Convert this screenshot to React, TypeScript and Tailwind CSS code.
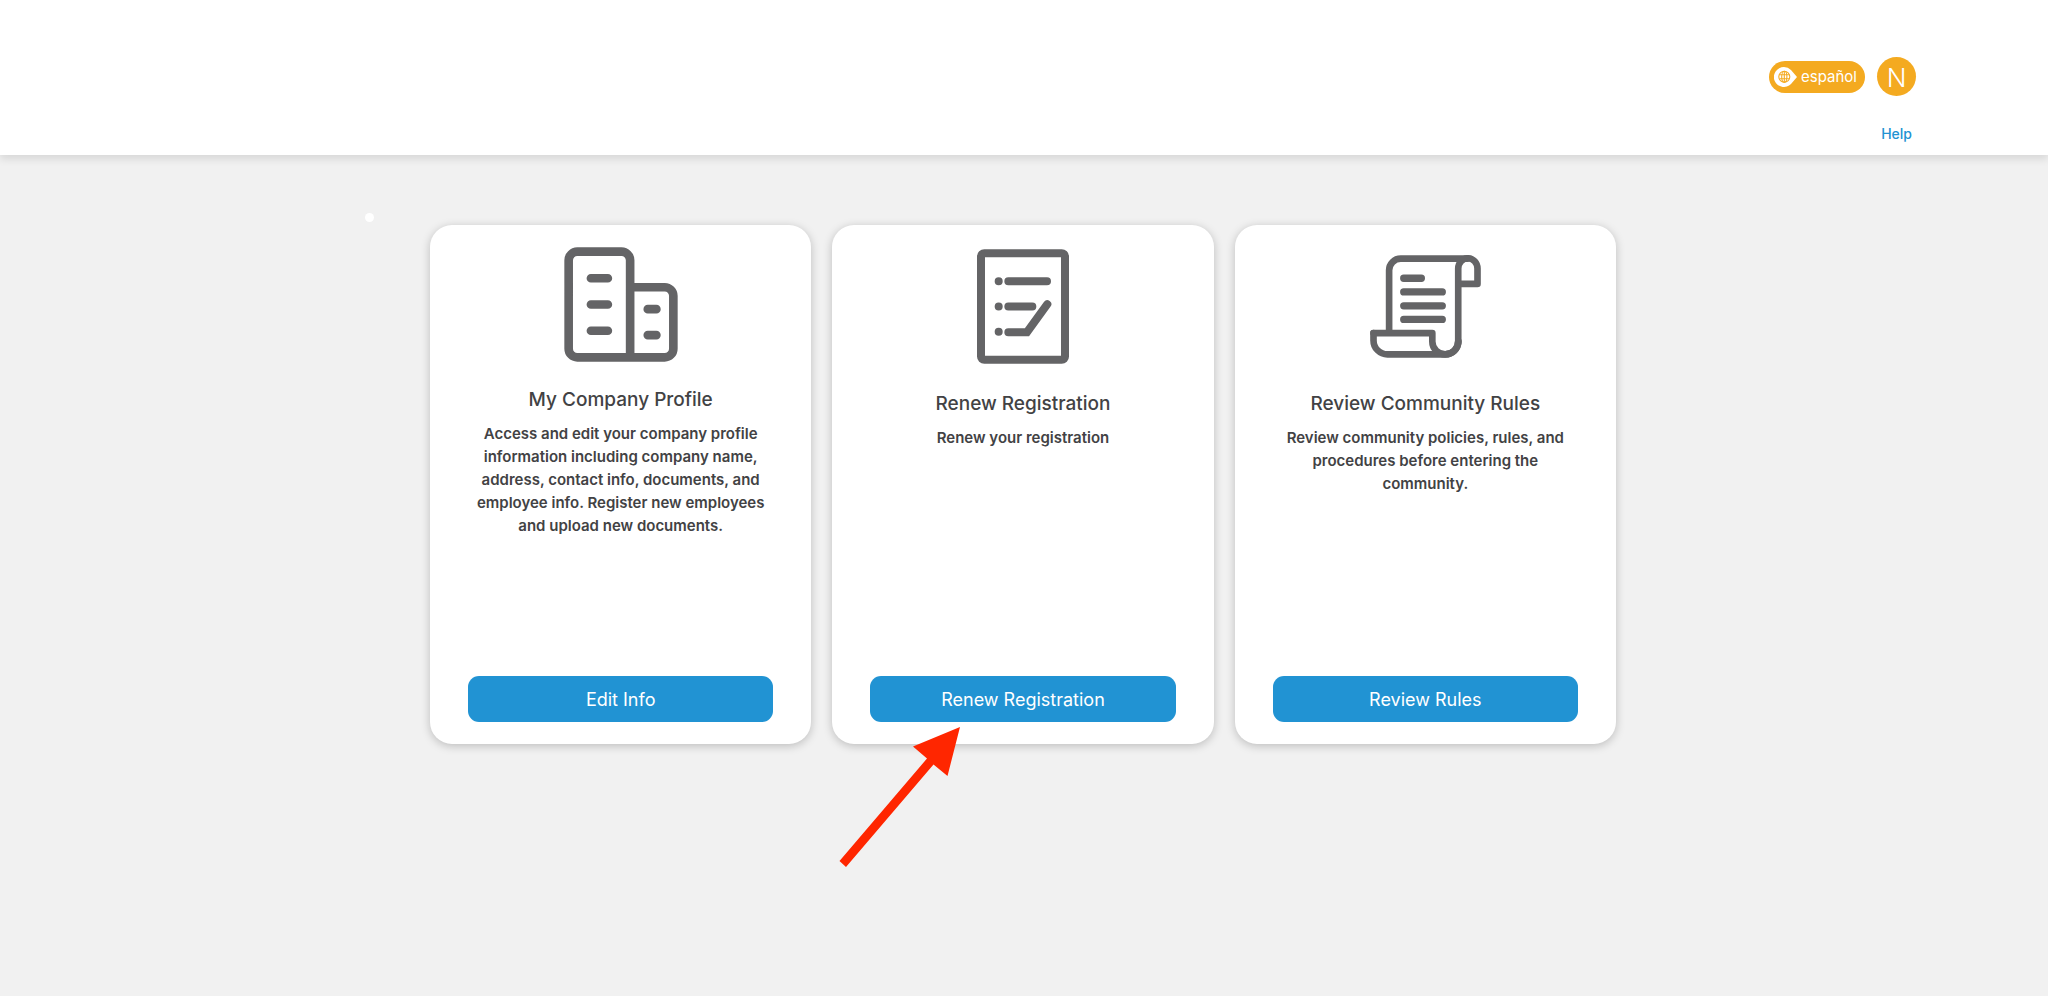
import type { ReactNode } from 'react';

interface CardItem {
  id: string;
  title: string;
  description: string;
  action: string;
  iconSlot: string;
  icon: ReactNode;
}

function BuildingIcon() {
  return (
    <svg viewBox="70 50 343 344" width="114" height="115" fill="none" stroke="#646466" strokeWidth="26" strokeLinecap="round" aria-hidden="true">
      <path d="M269 381V89a26 26 0 0 0-26-26H110a26 26 0 0 0-26 26v266a26 26 0 0 0 26 26h263a26 26 0 0 0 26-26V196a26 26 0 0 0-26-26H269" />
      <path d="M151 143h51M151 222h51M151 301h51M322 236h26M322 314h26" />
    </svg>
  );
}

function FormIcon() {
  return (
    <svg viewBox="79 57 276 344" width="92" height="115" fill="none" stroke="#646466" strokeWidth="24" strokeLinecap="round" aria-hidden="true">
      <rect x="91" y="69" width="252" height="320" rx="10" />
      <path d="M144 153h.1M144 229h.1M144 305h.1M173 153h116M173 229h72" />
      <path d="M173 306h56L290 222" />
    </svg>
  );
}

function ScrollIcon() {
  return (
    <svg viewBox="60 75 333 310" width="111" height="103" fill="none" stroke="#646466" strokeWidth="20" strokeLinecap="round" strokeLinejoin="round" aria-hidden="true">
      <path d="M117 308V121a35 35 0 0 1 35-35H352" />
      <path d="M325 338V116a28 30 0 0 1 58 0V162H325" />
      <path d="M70 310H247V335a39 39 0 0 0 78 0" />
      <path d="M70 310v22a42 42 0 0 0 42 42H286a39 39 0 0 0 39-39" />
      <path d="M161 145h53M161 186h116M161 228h116M161 269h116" strokeWidth="22" />
    </svg>
  );
}

const cards: CardItem[] = [
  {
    id: 'profile',
    title: 'My Company Profile',
    description:
      'Access and edit your company profile information including company name, address, contact info, documents, and employee info. Register new employees and upload new documents.',
    action: 'Edit Info',
    iconSlot: 'h-[161px]',
    icon: <BuildingIcon />,
  },
  {
    id: 'renew',
    title: 'Renew Registration',
    description: 'Renew your registration',
    action: 'Renew Registration',
    iconSlot: 'h-[165px]',
    icon: <FormIcon />,
  },
  {
    id: 'rules',
    title: 'Review Community Rules',
    description: 'Review community policies, rules, and procedures before entering the community.',
    action: 'Review Rules',
    iconSlot: 'h-[165px]',
    icon: <ScrollIcon />,
  },
];

function Header() {
  return (
    <header className="relative flex h-[155px] flex-col items-end bg-white pt-[57px] pr-[132px] shadow-[0_4px_8px_rgba(0,0,0,0.11)]">
      <div className="flex items-center gap-3">
        <button className="flex h-8 items-center gap-1 rounded-full bg-[#f4aa20] pr-2 pl-[5px] text-[15px] text-white">
          <svg viewBox="0 0 23 20" width="23" height="20" fill="none" aria-hidden="true">
            <path d="M10 0a10 10 0 0 1 7 3l6 7-6 7A10 10 0 1 1 10 0Z" fill="#fff" />
            <g stroke="#f4aa20" strokeWidth="1.100">
              <circle cx="10.300" cy="9.800" r="5.500" />
              <ellipse cx="10.300" cy="9.800" rx="2.600" ry="5.500" />
              <path d="M5.500 7.800h9.600M5.500 11.800h9.600M10.300 4.300v11" />
            </g>
          </svg>
          <span className="pt-px">español</span>
        </button>
        <button className="flex size-[39px] items-center justify-center rounded-full bg-[#f4aa20] pt-px text-[26px] font-light text-white">
          N
        </button>
      </div>
      <a href="#help" className="mt-7 mr-1 text-[14px] leading-5 font-medium text-[#2193d3]">
        Help
      </a>
    </header>
  );
}

function Card({ item }: { item: CardItem }) {
  return (
    <section className="relative flex min-h-[519px] flex-col items-center rounded-[22px] bg-white px-[38px] pb-[22px] text-center shadow-[0_2px_10px_rgba(0,0,0,0.22)]">
      <div className={`flex items-center justify-center pb-[3px] ${item.iconSlot}`}>{item.icon}</div>
      <h2 className="text-[19px] leading-7 font-medium text-[#424244]">{item.title}</h2>
      <p className="mt-2 text-[15px] leading-[23px] font-semibold text-[#424244]">{item.description}</p>
      <button className="mt-auto h-[46px] w-full rounded-[11px] bg-[#2193d3] pt-px text-[18px] text-white">
        {item.action}
      </button>
      {item.id === 'renew' && (
        <svg
          viewBox="0 0 122 140"
          width="122"
          height="140"
          className="pointer-events-none absolute top-[502px] left-[7px] z-10"
          aria-hidden="true"
        >
          <path d="M121 0 108.500 49 94.500 37.500 7 140 .500 134 88 31.500 74 19.500Z" fill="#ff2600" />
        </svg>
      )}
    </section>
  );
}

export default function App() {
  return (
    <div className="min-h-screen bg-[#f1f1f1] font-['Inter','Liberation_Sans',sans-serif]">
      <Header />
      <main className="relative mx-auto max-w-[1188px] pt-[70px] pr-0.5">
        <span className="absolute top-[58px] -left-[65px] size-[9px] rounded-full bg-white" />
        <div className="grid grid-cols-3 gap-[21px]">
          {cards.map((item) => (
            <Card key={item.id} item={item} />
          ))}
        </div>
      </main>
    </div>
  );
}
